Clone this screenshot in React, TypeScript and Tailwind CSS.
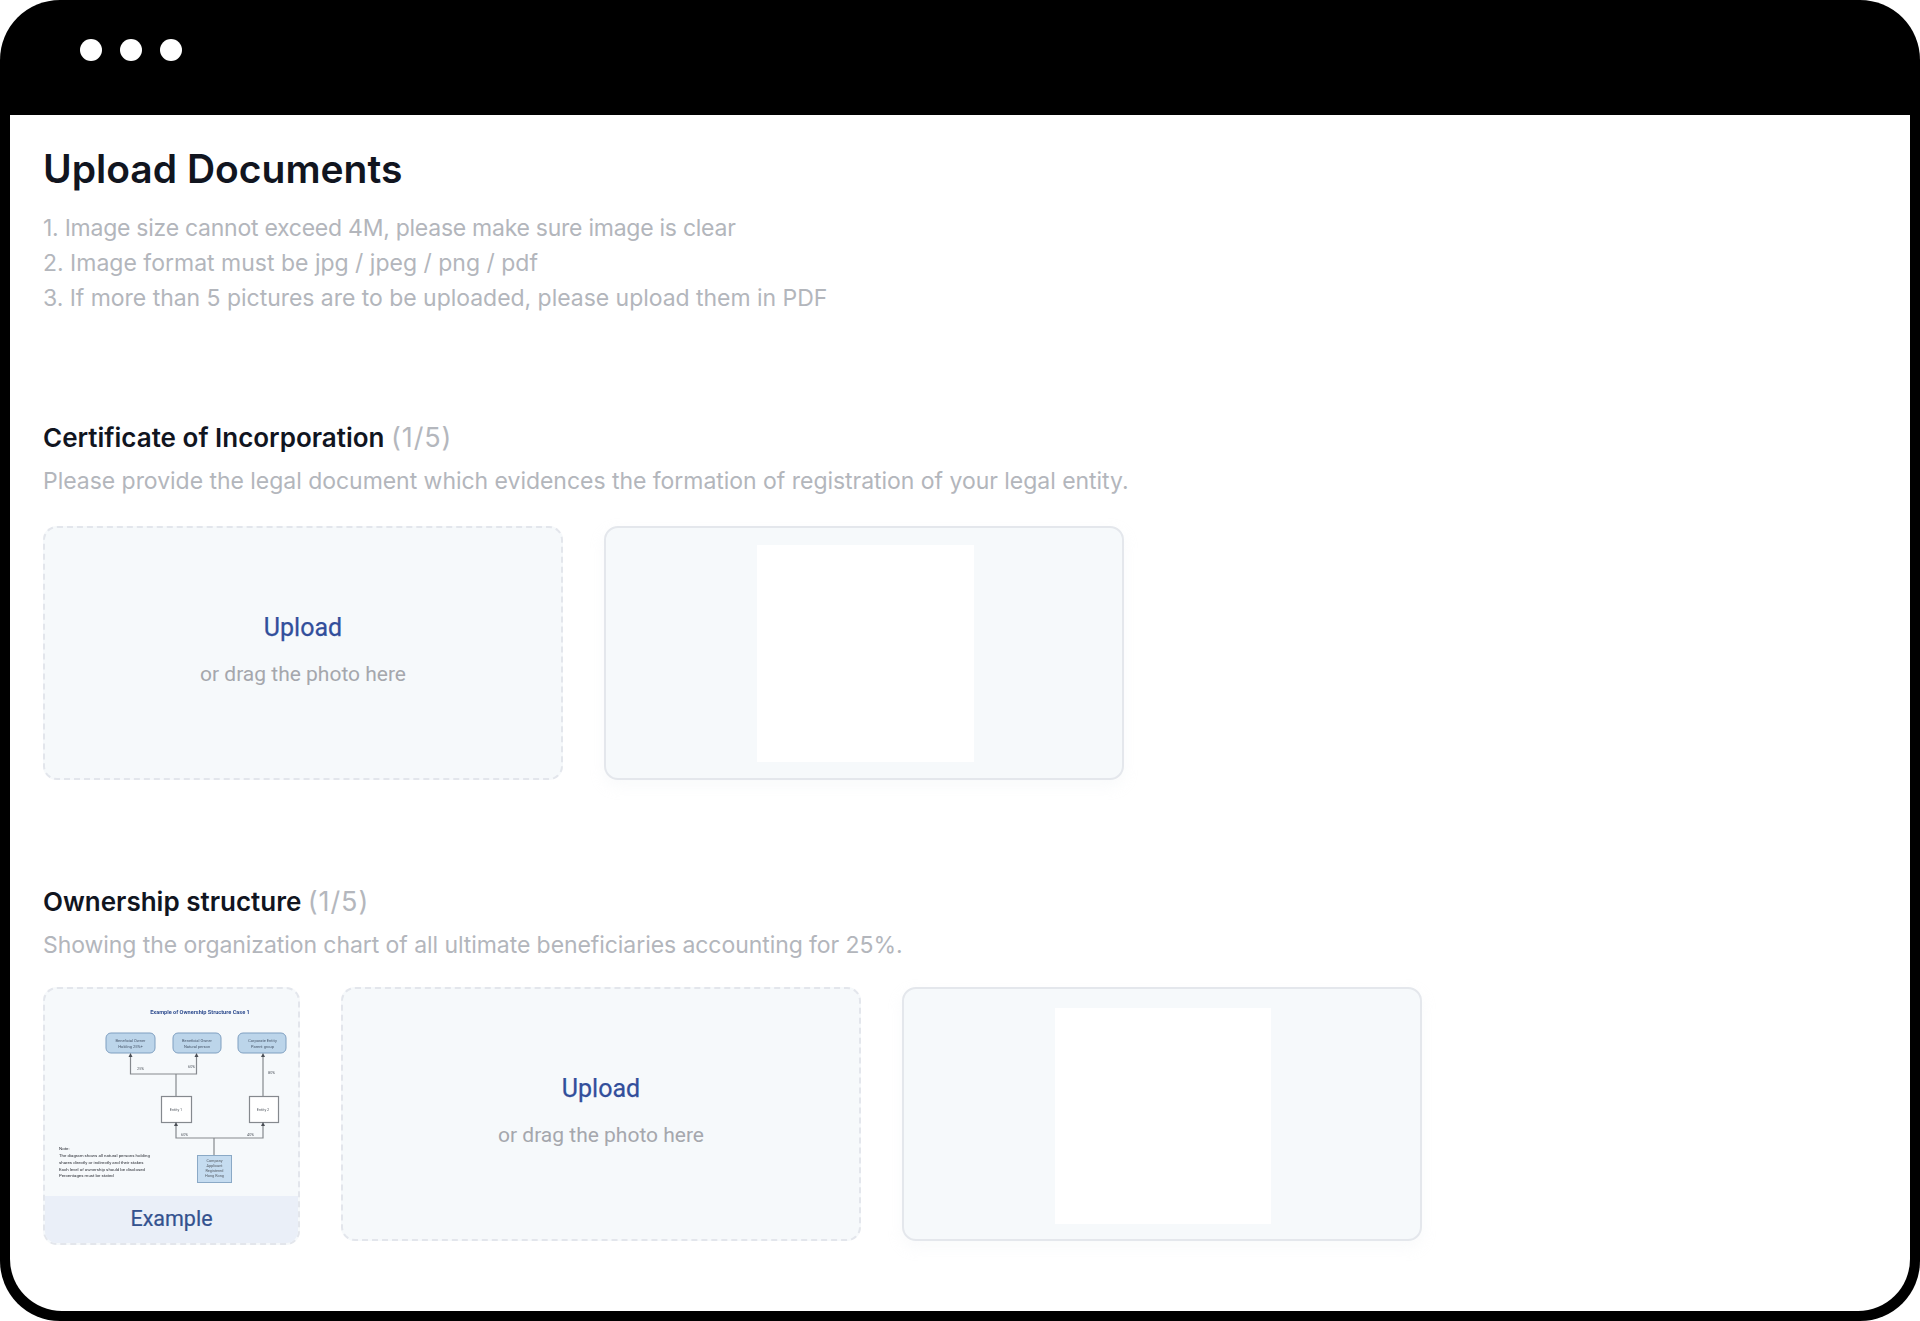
const body = "font-['Inter','Liberation_Sans',sans-serif]";

function UploadCard() {
  return (
    <div className="flex h-[254px] w-[520px] shrink-0 flex-col items-center rounded-[14px] border-2 border-dashed border-[#e3e6ec] bg-[#f6f9fb] pt-[84px]">
      <span className="font-['Roboto',sans-serif] text-[25px] leading-[32px] text-[#324f9b] [-webkit-text-stroke:0.25px_#324f9b]">Upload</span>
      <span className="mt-[16px] font-['Roboto',sans-serif] text-[21px] leading-[28px] text-[#a5a7ad]">or drag the photo here</span>
    </div>
  );
}

function PreviewCard({ low }: { low?: boolean }) {
  return (
    <div className="flex h-[254px] w-[520px] shrink-0 justify-center rounded-[14px] border-2 border-[#e4e7ec] bg-[#f6f9fb] shadow-[0_6px_14px_rgba(230,235,240,0.25)]">
      <div className={low ? "ml-[2px] mt-[19px] h-[216px] w-[216px] bg-white" : "ml-[2px] mt-[17px] h-[217px] w-[217px] bg-white"} />
    </div>
  );
}

function SectionHeading({ title, count, note, noteClass }: { title: string; count: string; note: string; noteClass?: string }) {
  return (
    <>
      <h2 className="text-[26px] font-semibold leading-[36px] text-[#11151f]">
        {title} <span className="text-[27px] font-normal tracking-[0.9px] text-[#b4b7bd]">{count}</span>
      </h2>
      <p className={`mt-[7px] text-[23px] leading-[36px] text-[#b3b6bc] ${noteClass ?? ""}`}>{note}</p>
    </>
  );
}

function OrgChart() {
  return (
    <svg viewBox="0 0 256 209" className="h-[209px] w-[256px] blur-[0.4px]" fontFamily="Roboto, sans-serif">
      <text x="157" y="25" textAnchor="middle" fontSize="5.6" fontWeight="700" fill="#2f4d8f">Example of Ownership Structure Case 1</text>
      {[63, 130, 195].map(x => (
        <rect key={x} x={x} y="44" width={x === 63 ? 49 : 48} height="20" rx="5" fill="#bcd5ea" stroke="#7f9fc0" strokeWidth="1" />
      ))}
      {([[87.5, "Beneficial Owner", "Holding 25%+"], [154, "Beneficial Owner", "Natural person"], [219.5, "Corporate Entity", "Parent group"]] as [number, string, string][]).map(([x, a, b]) => (
        <text key={x} x={x} textAnchor="middle" fontSize="4" fill="#48576b">
          <tspan x={x} y="53">{a}</tspan>
          <tspan x={x} y="59">{b}</tspan>
        </text>
      ))}
      <g fill="none" stroke="#85898e" strokeWidth="1.2">
        <path d="M87.5 67V85H153.5V67" />
        <path d="M133 85V107" />
        <path d="M220 67V107" />
        <path d="M133 136V149H220V136" />
        <path d="M171 149V166" />
        <rect x="118.5" y="107.5" width="30" height="26" fill="#fff" />
        <rect x="206.5" y="107.5" width="29" height="26" fill="#fff" />
      </g>
      <g fill="#4a4e55">
        <path d="M87.5 64l-2 4h4zM153.5 64l-2 4h4zM220 64l-2 4h4zM133 133l-2 4h4zM220 133l-2 4h4z" />
      </g>
      <rect x="154.5" y="166.5" width="34" height="27" fill="#c5dcf0" stroke="#8aa9c6" />
      <g fontSize="3.8" fill="#555b63">
        <text x="133" y="122" textAnchor="middle">Entity 1</text>
        <text x="220" y="122" textAnchor="middle">Entity 2</text>
        <text x="94" y="81">25%</text>
        <text x="145" y="79">60%</text>
        <text x="225" y="85">80%</text>
        <text x="138" y="147">60%</text>
        <text x="204" y="147">40%</text>
        <text x="171.5" y="173" textAnchor="middle">Company</text>
        <text x="171.5" y="178" textAnchor="middle">Applicant</text>
        <text x="171.5" y="183" textAnchor="middle">Registered</text>
        <text x="171.5" y="188" textAnchor="middle">Hong Kong</text>
      </g>
      <g fontSize="4.4" fill="#2e3138">
        <text x="16" y="161">Note:</text>
        <text x="16" y="168">The diagram shows all natural persons holding</text>
        <text x="16" y="175">shares directly or indirectly and their stakes</text>
        <text x="16" y="182">Each level of ownership should be disclosed</text>
        <text x="16" y="188">Percentages must be stated</text>
      </g>
    </svg>
  );
}

function ExampleCard() {
  return (
    <div className="flex h-[258px] w-[257px] shrink-0 flex-col overflow-hidden rounded-[14px] border-2 border-dashed border-[#e3e6ec] bg-[#f6f9fb]">
      <div className="h-[207px] shrink-0">
        <div className="-ml-[2px]">
          <OrgChart />
        </div>
      </div>
      <div className="flex flex-1 items-center justify-center bg-[#eaeff8] font-['Roboto',sans-serif] text-[21.5px] text-[#34528f] [-webkit-text-stroke:0.2px_#34528f]">
        Example
      </div>
    </div>
  );
}

export default function App() {
  return (
    <div className="h-[1321px] w-[1920px] overflow-hidden bg-white">
      <div className={`flex h-full flex-col rounded-[60px] bg-black ${body}`}>
        <div className="flex h-[115px] shrink-0 gap-[18px] pl-[80px] pt-[39px]">
          <span className="h-[22px] w-[22px] rounded-full bg-white" />
          <span className="h-[22px] w-[22px] rounded-full bg-white" />
          <span className="h-[22px] w-[22px] rounded-full bg-white" />
        </div>
        <div className="mx-[10px] mb-[10px] flex-1 rounded-b-[52px] bg-white pl-[33px] pt-[29px]">
          <h1 className="text-[39px] font-semibold leading-[50px] text-[#11151f]">Upload Documents</h1>
          <ol className="mt-[17px] text-[23px] leading-[35px] text-[#b3b6bc]">
            <li className="tracking-[-0.26px]">1. Image size cannot exceed 4M, please make sure image is clear</li>
            <li>2. Image format must be jpg / jpeg / png / pdf</li>
            <li className="tracking-[-0.035px]">3. If more than 5 pictures are to be uploaded, please upload them in PDF</li>
          </ol>
          <div className="mt-[104px]">
            <SectionHeading
              title="Certificate of Incorporation"
              count="(1/5)"
              note="Please provide the legal document which evidences the formation of registration of your legal entity."
              noteClass="tracking-[-0.035px]"
            />
            <div className="mt-[27px] flex gap-[41px]">
              <UploadCard />
              <PreviewCard />
            </div>
          </div>
          <div className="mt-[104px]">
            <SectionHeading
              title="Ownership structure"
              count="(1/5)"
              note="Showing the organization chart of all ultimate beneficiaries accounting for 25%."
              noteClass="tracking-[-0.07px]"
            />
            <div className="mt-[24px] flex items-start gap-[41px]">
              <ExampleCard />
              <UploadCard />
              <PreviewCard low />
            </div>
          </div>
        </div>
      </div>
    </div>
  );
}
